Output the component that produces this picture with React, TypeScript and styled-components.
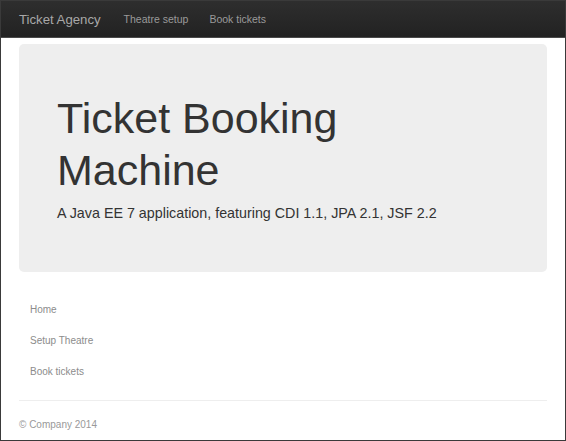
import React from 'react';
import styled, { createGlobalStyle } from 'styled-components';

const GlobalStyle = createGlobalStyle`
  html, body {
    margin: 0;
    padding: 0;
    background: #fff;
  }
  body {
    font-family: "Liberation Sans", Arial, sans-serif;
  }
`;

const Frame = styled.div`
  box-sizing: border-box;
  width: 566px;
  height: 441px;
  border: 1px solid #3a3a3a;
  overflow: hidden;
  display: flex;
  flex-direction: column;
`;

const Navbar = styled.nav`
  display: flex;
  align-items: center;
  height: 36px;
  padding: 0 18px;
  background: linear-gradient(to bottom, #2e2e2e 0%, #222 100%);
  border-bottom: 1px solid #4a4a4a;
`;

const Brand = styled.a`
  font-size: 13.2px;
  color: #a8a8a8;
  margin-right: 23px;
`;

const NavLink = styled.a`
  font-size: 10.5px;
  color: #9a9a9a;
  margin-right: 21px;
`;

const Container = styled.div`
  display: flex;
  flex-direction: column;
  padding: 0 18px;
  margin-top: 6px;
`;

const Jumbotron = styled.section`
  background: #eeeeee;
  border-radius: 5px;
  padding: 48px 38px 49px;
`;

const Title = styled.h1`
  margin: 0;
  font-weight: normal;
  font-size: 43px;
  line-height: 52px;
  color: #333;
`;

const Lead = styled.p`
  margin: 7px 0 0;
  font-size: 14.3px;
  line-height: 20px;
  color: #333;
`;

const Menu = styled.ul`
  list-style: none;
  margin: 22px 0 0;
  padding: 0 11px;
  display: flex;
  flex-direction: column;
`;

const MenuItem = styled.li`
  font-size: 10px;
  line-height: 31px;
  color: #8c8c8c;
`;

const Divider = styled.hr`
  border: 0;
  border-top: 1px solid #eee;
  margin: 13px 0 0;
`;

const Footer = styled.footer`
  font-size: 10px;
  color: #999;
  padding-top: 18px;
`;

export default function App() {
  return (
    <>
      <GlobalStyle />
      <Frame>
        <Navbar>
          <Brand>Ticket Agency</Brand>
          <NavLink>Theatre setup</NavLink>
          <NavLink>Book tickets</NavLink>
        </Navbar>
        <Container>
          <Jumbotron>
            <Title>
              Ticket Booking
              <br />
              Machine
            </Title>
            <Lead>A Java EE 7 application, featuring CDI 1.1, JPA 2.1, JSF 2.2</Lead>
          </Jumbotron>
          <Menu>
            <MenuItem>Home</MenuItem>
            <MenuItem>Setup Theatre</MenuItem>
            <MenuItem>Book tickets</MenuItem>
          </Menu>
          <Divider />
          <Footer>© Company 2014</Footer>
        </Container>
      </Frame>
    </>
  );
}
